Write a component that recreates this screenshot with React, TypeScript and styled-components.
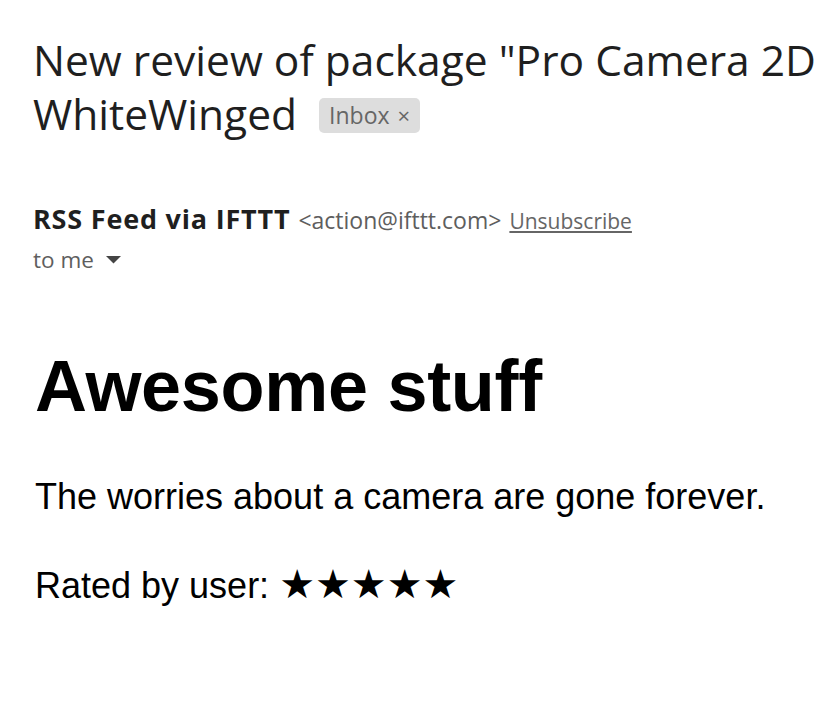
import styled, { createGlobalStyle } from "styled-components";

const GlobalStyle = createGlobalStyle`
  html, body {
    margin: 0;
    padding: 0;
    background: #ffffff;
    overflow: hidden;
  }
`;

const Page = styled.div`
  width: 826px;
  height: 706px;
  overflow: hidden;
  padding: 33px 0 0 33px;
  box-sizing: border-box;
`;

const Subject = styled.h2`
  margin: 0;
  font-family: "Open Sans", Roboto, sans-serif;
  font-size: 42.5px;
  line-height: 54px;
  font-weight: 400;
  color: #1f1f1f;
`;

const SubjectLine = styled.span`
  display: block;
  white-space: nowrap;
`;

const Chip = styled.span`
  display: inline-flex;
  align-items: center;
  gap: 8px;
  height: 35px;
  padding: 0 10px;
  margin-left: 22px;
  border-radius: 5px;
  background: #dddddd;
  color: #666666;
  font-size: 23px;
  vertical-align: 6px;
`;

const ChipClose = styled.span`
  font-size: 22px;
  line-height: 1;
`;

const Sender = styled.div`
  margin-top: 62px;
  font-family: "Open Sans", Roboto, sans-serif;
`;

const FromRow = styled.div`
  display: flex;
  align-items: baseline;
  gap: 8px;
  line-height: 32px;
  white-space: nowrap;
`;

const Name = styled.span`
  font-size: 27px;
  font-weight: 700;
  letter-spacing: 0.8px;
  color: #1f1f1f;
`;

const Address = styled.span`
  font-size: 23px;
  color: #5e5e5e;
`;

const Unsubscribe = styled.a`
  font-size: 21px;
  color: #666666;
  text-decoration: underline;
`;

const ToRow = styled.div`
  display: flex;
  align-items: center;
  gap: 12px;
  margin-top: 8px;
  line-height: 30px;
  font-size: 22.5px;
  color: #5e5e5e;
`;

const Body = styled.div`
  display: flex;
  flex-direction: column;
  margin-top: 70px;
  padding-left: 2px;
  font-family: "Liberation Sans", Arial, sans-serif;
  color: #000000;
`;

const Heading = styled.h1`
  margin: 0 0 44px;
  font-size: 72px;
  font-weight: 700;
  line-height: 1.15;
  letter-spacing: -0.3px;
`;

const Paragraph = styled.p`
  margin: 0 0 37px;
  font-size: 36px;
  line-height: 50px;
`;

const Stars = styled.span`
  font-family: "DejaVu Sans", sans-serif;
  font-size: 40px;
`;

export default function App() {
  return (
    <>
      <GlobalStyle />
      <Page>
        <Subject>
          <SubjectLine>New review of package "Pro Camera 2D</SubjectLine>
          <SubjectLine>
            WhiteWinged
            <Chip>
              Inbox<ChipClose>×</ChipClose>
            </Chip>
          </SubjectLine>
        </Subject>
        <Sender>
          <FromRow>
            <Name>RSS Feed via IFTTT</Name>
            <Address>&lt;action@ifttt.com&gt;</Address>
            <Unsubscribe>Unsubscribe</Unsubscribe>
          </FromRow>
          <ToRow>
            to me
            <svg width="15" height="8" viewBox="0 0 15 8">
              <path d="M0 0 L15 0 L7.5 7.5 Z" fill="#444444" />
            </svg>
          </ToRow>
        </Sender>
        <Body>
          <Heading>Awesome stuff</Heading>
          <Paragraph>The worries about a camera are gone forever.</Paragraph>
          <Paragraph>
            Rated by user: <Stars>★★★★★</Stars>
          </Paragraph>
        </Body>
      </Page>
    </>
  );
}
